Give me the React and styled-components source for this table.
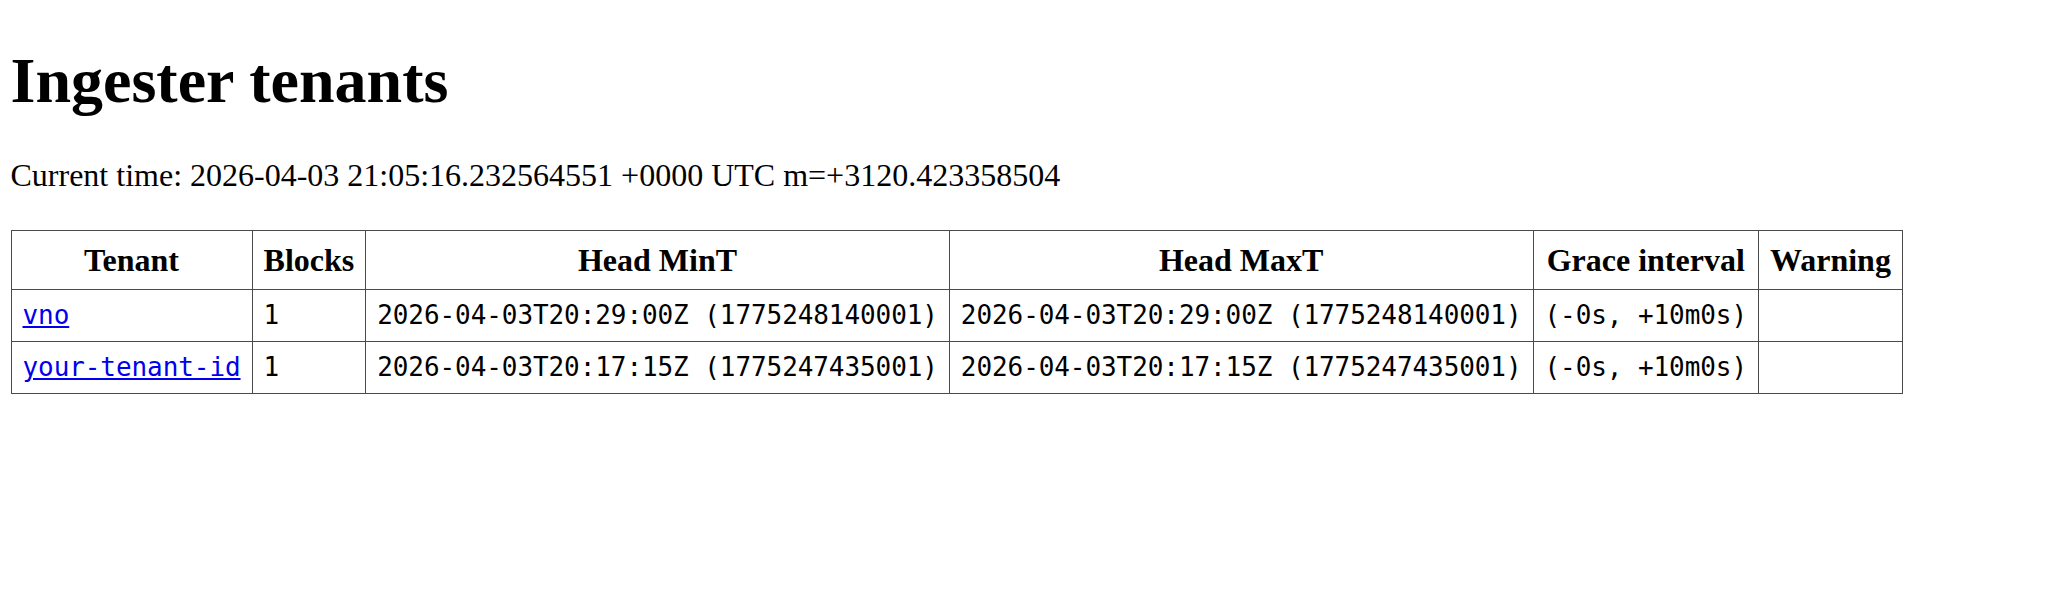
import React from "react";
import styled, { createGlobalStyle } from "styled-components";

const GlobalStyle = createGlobalStyle`
  html, body {
    margin: 0;
    padding: 0;
    background: #ffffff;
    color: #000000;
    font-family: "Liberation Serif", "Times New Roman", serif;
  }
`;

const Page = styled.main`
  padding: 45px 10.5px 0 10.5px;
`;

const Title = styled.h1`
  margin: 0;
  font-size: 64px;
  line-height: 71px;
  font-weight: 700;
`;

const CurrentTime = styled.p`
  margin: 42px 0 0;
  font-size: 32px;
  line-height: 35px;
`;

const Table = styled.table`
  margin-top: 37px;
  border-collapse: collapse;
  border: 1px solid #4a4a4a;
`;

const HeadCell = styled.th`
  border: 1px solid #4a4a4a;
  padding: 11px;
  font-size: 32px;
  line-height: 36px;
  font-weight: 700;
  text-align: center;
  white-space: nowrap;
`;

const Cell = styled.td`
  border: 1px solid #4a4a4a;
  padding: 10px 11px 11px;
  font-family: "DejaVu Sans Mono", "Liberation Mono", monospace;
  font-size: 26px;
  letter-spacing: -0.08px;
  line-height: 30px;
  text-align: left;
  white-space: nowrap;
  vertical-align: middle;
`;

const TenantLink = styled.a`
  color: #0000ee;
  text-decoration: underline;
`;

const columns = ["Tenant", "Blocks", "Head MinT", "Head MaxT", "Grace interval", "Warning"];

const rows = [
  {
    tenant: "vno",
    blocks: "1",
    minT: "2026-04-03T20:29:00Z (1775248140001)",
    maxT: "2026-04-03T20:29:00Z (1775248140001)",
    grace: "(-0s, +10m0s)",
    warning: "",
  },
  {
    tenant: "your-tenant-id",
    blocks: "1",
    minT: "2026-04-03T20:17:15Z (1775247435001)",
    maxT: "2026-04-03T20:17:15Z (1775247435001)",
    grace: "(-0s, +10m0s)",
    warning: "",
  },
];

export default function App() {
  return (
    <>
      <GlobalStyle />
      <Page>
        <Title>Ingester tenants</Title>
        <CurrentTime>
          Current time: 2026-04-03 21:05:16.232564551 +0000 UTC m=+3120.423358504
        </CurrentTime>
        <Table>
          <thead>
            <tr>
              {columns.map((c) => (
                <HeadCell key={c}>{c}</HeadCell>
              ))}
            </tr>
          </thead>
          <tbody>
            {rows.map((r) => (
              <tr key={r.tenant}>
                <Cell>
                  <TenantLink href={`#${r.tenant}`}>{r.tenant}</TenantLink>
                </Cell>
                <Cell>{r.blocks}</Cell>
                <Cell>{r.minT}</Cell>
                <Cell>{r.maxT}</Cell>
                <Cell>{r.grace}</Cell>
                <Cell>{r.warning}</Cell>
              </tr>
            ))}
          </tbody>
        </Table>
      </Page>
    </>
  );
}
